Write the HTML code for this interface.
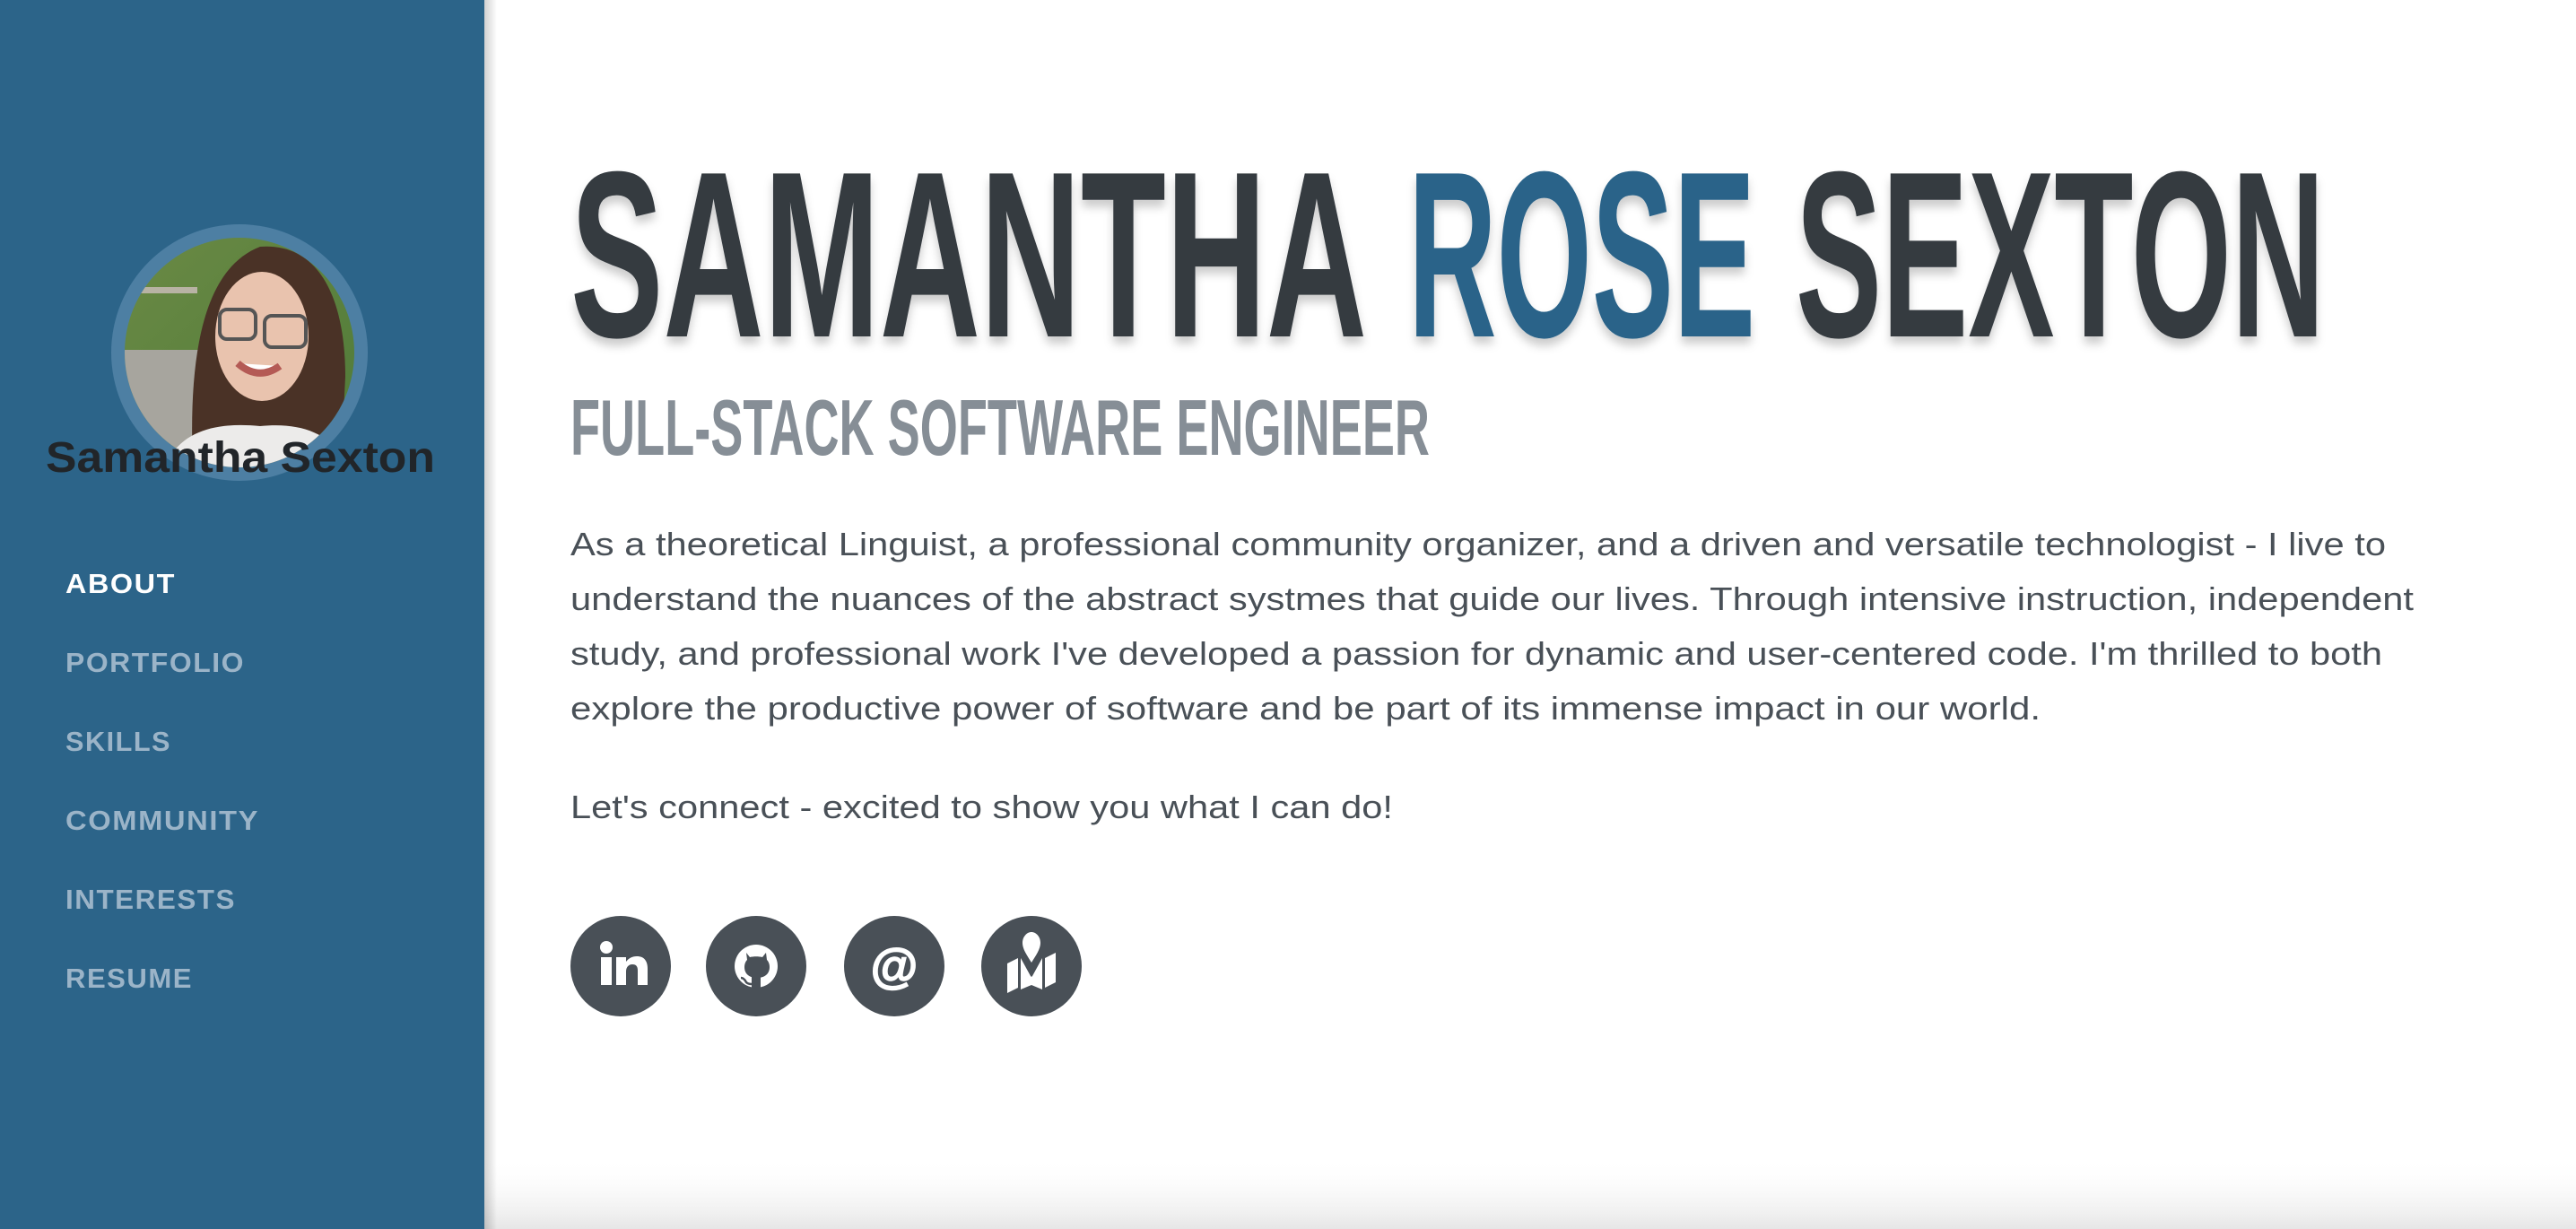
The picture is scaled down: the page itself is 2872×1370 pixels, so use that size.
<!DOCTYPE html>
<html><head><meta charset="utf-8"><style>
html,body{margin:0;padding:0;width:2872px;height:1370px;overflow:hidden;background:#fff;}
svg{display:block}
</style></head><body>
<svg width="2872" height="1370" viewBox="0 0 2872 1370" xmlns="http://www.w3.org/2000/svg">
<defs>
<linearGradient id="bot" x1="0" y1="0" x2="0" y2="1">
<stop offset="0" stop-color="#fff" stop-opacity="0"/><stop offset="1" stop-color="#e6e6e6"/></linearGradient>
<linearGradient id="side" x1="0" y1="0" x2="1" y2="0">
<stop offset="0" stop-color="#000" stop-opacity="0.18"/><stop offset="1" stop-color="#000" stop-opacity="0"/></linearGradient>
<filter id="ts" x="-5%" y="-5%" width="110%" height="120%"><feDropShadow dx="0" dy="8" stdDeviation="5" flood-color="#000" flood-opacity="0.2"/></filter>
<clipPath id="av"><circle cx="267" cy="393" r="128"/></clipPath>
<linearGradient id="bg" x1="0" y1="0" x2="1" y2="1"><stop offset="0" stop-color="#6b8a45"/><stop offset="1" stop-color="#4e7a38"/></linearGradient>
</defs>
<rect x="0" y="1290" width="2872" height="80" fill="url(#bot)"/>
<rect x="0" y="0" width="540" height="1370" fill="#2c6489"/>
<rect x="540" y="0" width="14" height="1370" fill="url(#side)"/>
<!-- avatar -->
<circle cx="267" cy="393" r="143" fill="#4d7fa3"/>
<g clip-path="url(#av)">
<rect x="130" y="260" width="280" height="270" fill="url(#bg)"/>
<rect x="130" y="390" width="100" height="130" fill="#a7a59e"/>
<rect x="130" y="320" width="90" height="7" fill="#b8b3a4"/>
<path d="M215 520 C210 400 225 300 290 275 C360 270 385 340 385 420 L380 520 Z" fill="#4a3226"/>
<ellipse cx="292" cy="375" rx="52" ry="72" fill="#e9c3ae"/>
<path d="M180 530 C195 480 240 470 290 475 C340 470 375 485 395 530 Z" fill="#ecebea"/>
<g stroke="#555" stroke-width="4" fill="none"><rect x="245" y="345" width="40" height="33" rx="8"/><rect x="295" y="352" width="46" height="35" rx="8"/></g>
<path d="M265 405 Q288 425 312 408" stroke="#b45a55" stroke-width="8" fill="#fff"/>
</g>
<text x="51" y="526" textLength="434" lengthAdjust="spacingAndGlyphs" font-family="Liberation Sans, sans-serif" font-weight="bold" font-size="48" fill="#212529">Samantha Sexton</text>
<!-- nav -->
<g font-family="Liberation Sans, sans-serif" font-weight="bold" font-size="31" letter-spacing="1.5" fill="#9bb4c8">
<text x="73" y="661" fill="#fff" textLength="123" lengthAdjust="spacingAndGlyphs">ABOUT</text>
<text x="73" y="749" textLength="200" lengthAdjust="spacingAndGlyphs">PORTFOLIO</text>
<text x="73" y="837" textLength="118" lengthAdjust="spacingAndGlyphs">SKILLS</text>
<text x="73" y="925" textLength="216" lengthAdjust="spacingAndGlyphs">COMMUNITY</text>
<text x="73" y="1013" textLength="190" lengthAdjust="spacingAndGlyphs">INTERESTS</text>
<text x="73" y="1101" textLength="142" lengthAdjust="spacingAndGlyphs">RESUME</text>
</g>
<!-- heading -->
<g font-family="Liberation Sans Narrow, Liberation Sans, sans-serif" font-weight="bold" font-size="264" filter="url(#ts)">
<text x="636" y="375" textLength="888" lengthAdjust="spacingAndGlyphs" fill="#343a40">SAMANTHA</text>
<text x="1570" y="375" textLength="387" lengthAdjust="spacingAndGlyphs" fill="#2c6489">ROSE</text>
<text x="2002" y="375" textLength="590" lengthAdjust="spacingAndGlyphs" fill="#343a40">SEXTON</text>
</g>
<text x="636" y="507" textLength="958" lengthAdjust="spacingAndGlyphs" font-family="Liberation Sans Narrow, Liberation Sans, sans-serif" font-weight="bold" font-size="88" fill="#868e96">FULL-STACK SOFTWARE ENGINEER</text>
<!-- paragraph -->
<g font-family="Liberation Sans, sans-serif" font-size="36" fill="#495057">
<text x="636" y="619" textLength="2024" lengthAdjust="spacingAndGlyphs">As a theoretical Linguist, a professional community organizer, and a driven and versatile technologist - I live to</text>
<text x="636" y="680" textLength="2055" lengthAdjust="spacingAndGlyphs">understand the nuances of the abstract systmes that guide our lives. Through intensive instruction, independent</text>
<text x="636" y="741" textLength="2020" lengthAdjust="spacingAndGlyphs">study, and professional work I've developed a passion for dynamic and user-centered code. I'm thrilled to both</text>
<text x="636" y="802" textLength="1639" lengthAdjust="spacingAndGlyphs">explore the productive power of software and be part of its immense impact in our world.</text>
<text x="636" y="912" textLength="917" lengthAdjust="spacingAndGlyphs">Let's connect - excited to show you what I can do!</text>
</g>
<!-- icons -->
<g fill="#495057">
<circle cx="692" cy="1077" r="56"/><circle cx="843" cy="1077" r="56"/><circle cx="997" cy="1077" r="56"/><circle cx="1150" cy="1077" r="56"/>
</g>
<g fill="#fff">
<circle cx="676" cy="1056" r="7"/>
<rect x="670" y="1067" width="12" height="31"/>
<path d="M687 1067 h11 v5 c3-4 7-6 12-6 c8 0 12 5 12 14 v18 h-11 v-16 c0-5-2-7-6-7 c-4 0-7 3-7 8 v15 h-11 Z"/>
</g>
<!-- github -->
<g>
<circle cx="843" cy="1077" r="24" fill="#fff"/>
<path d="M832 1062 l4 5 c4-1 10-1 14 0 l4-5 l1 8 c2 2 3 5 3 8 c0 8-6 12-14 12 c-8 0-14-4-14-12 c0-3 1-6 3-8 Z" fill="#495057"/>
<rect x="838" y="1088" width="10" height="15" fill="#495057"/>
<path d="M826 1090 c3 0 5 3 6 5 c2 2 4 2 6 2" stroke="#495057" stroke-width="2.5" fill="none"/>
</g>
<text x="997" y="1095" text-anchor="middle" font-family="Liberation Sans, sans-serif" font-weight="bold" font-size="54" fill="#fff" stroke="#fff" stroke-width="1.5">@</text>
<g fill="#fff">
<path d="M1150 1073 c-5-8-10-15-10-22 c0-7 5-12 10-12 c5 0 10 5 10 12 c0 7-5 14-10 22 Z"/>
<path d="M1123 1074 l12-6 v33 l-12 6 Z"/>
<path d="M1138 1068 l11 20 l1 1 l1-1 l11-20 v35 l-12-5 l-12 5 Z"/>
<path d="M1165 1068 l12-6 v33 l-12 6 Z"/>
</g>
</svg>
</body></html>
